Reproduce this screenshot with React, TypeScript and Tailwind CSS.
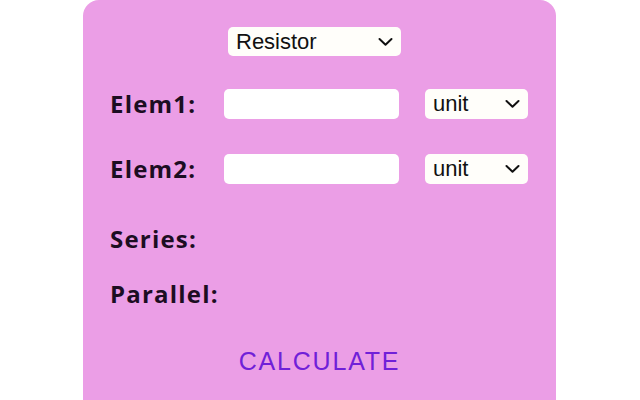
const selectFont = { fontFamily: '"Liberation Sans", Arial, sans-serif' };
const labelFont = { fontFamily: '"Open Sans", Lato, sans-serif' };

function Chevron() {
  return (
    <svg
      viewBox="0 0 15 9"
      className="pointer-events-none absolute right-[8px] top-1/2 h-[9px] w-[15px] -translate-y-1/2"
      fill="none"
      stroke="#111"
      strokeWidth="2"
      strokeLinecap="round"
      strokeLinejoin="round"
    >
      <path d="M1.5 1.5 L7.5 7.2 L13.5 1.5" />
    </svg>
  );
}

function Select({ value, options, className }: { value: string; options: string[]; className: string }) {
  return (
    <div className={`relative ${className}`}>
      <select
        defaultValue={value}
        className="h-full w-full appearance-none rounded-[5px] bg-[#fffefa] pl-[8px] text-[22px] leading-none text-[#111] outline-none"
        style={selectFont}
      >
        {options.map((o) => (
          <option key={o}>{o}</option>
        ))}
      </select>
      <Chevron />
    </div>
  );
}

function Label({ text, className = "" }: { text: string; className?: string }) {
  return (
    <span
      className={`text-[24px] font-bold leading-[30px] tracking-[1.2px] text-[#1c0d22] ${className}`}
      style={labelFont}
    >
      {text}
    </span>
  );
}

function ElemRow({ label, className }: { label: string; className: string }) {
  return (
    <div className={`flex items-center ${className}`}>
      <Label text={label} className="w-[114px] shrink-0" />
      <input type="text" className="h-[30px] w-[175px] rounded-[5px] bg-white px-2 outline-none" />
      <Select value="unit" options={["unit", "m", "k", "M"]} className="ml-[26px] h-[30px] w-[103px]" />
    </div>
  );
}

export default function App() {
  return (
    <div className="min-h-[400px] w-full bg-white">
      <div className="ml-[83px] h-[420px] w-[473px] rounded-[16px] bg-[#eb9ee6] pl-[27px] pt-[27px]">
        <Select value="Resistor" options={["Resistor", "Capacitor", "Inductor"]} className="ml-[118px] h-[29px] w-[173px]" />

        <ElemRow label="Elem1:" className="mt-[33px]" />
        <ElemRow label="Elem2:" className="mt-[35px]" />

        <div className="mt-[40px]">
          <Label text="Series:" className="block" />
        </div>
        <div className="mt-[25px]">
          <Label text="Parallel:" className="block" />
        </div>

        <div className="mt-[37px] pr-[27px] text-center">
          <button
            className="text-[25px] leading-[30px] tracking-[1.8px] text-[#7020d8]"
            style={selectFont}
          >
            CALCULATE
          </button>
        </div>
      </div>
    </div>
  );
}
